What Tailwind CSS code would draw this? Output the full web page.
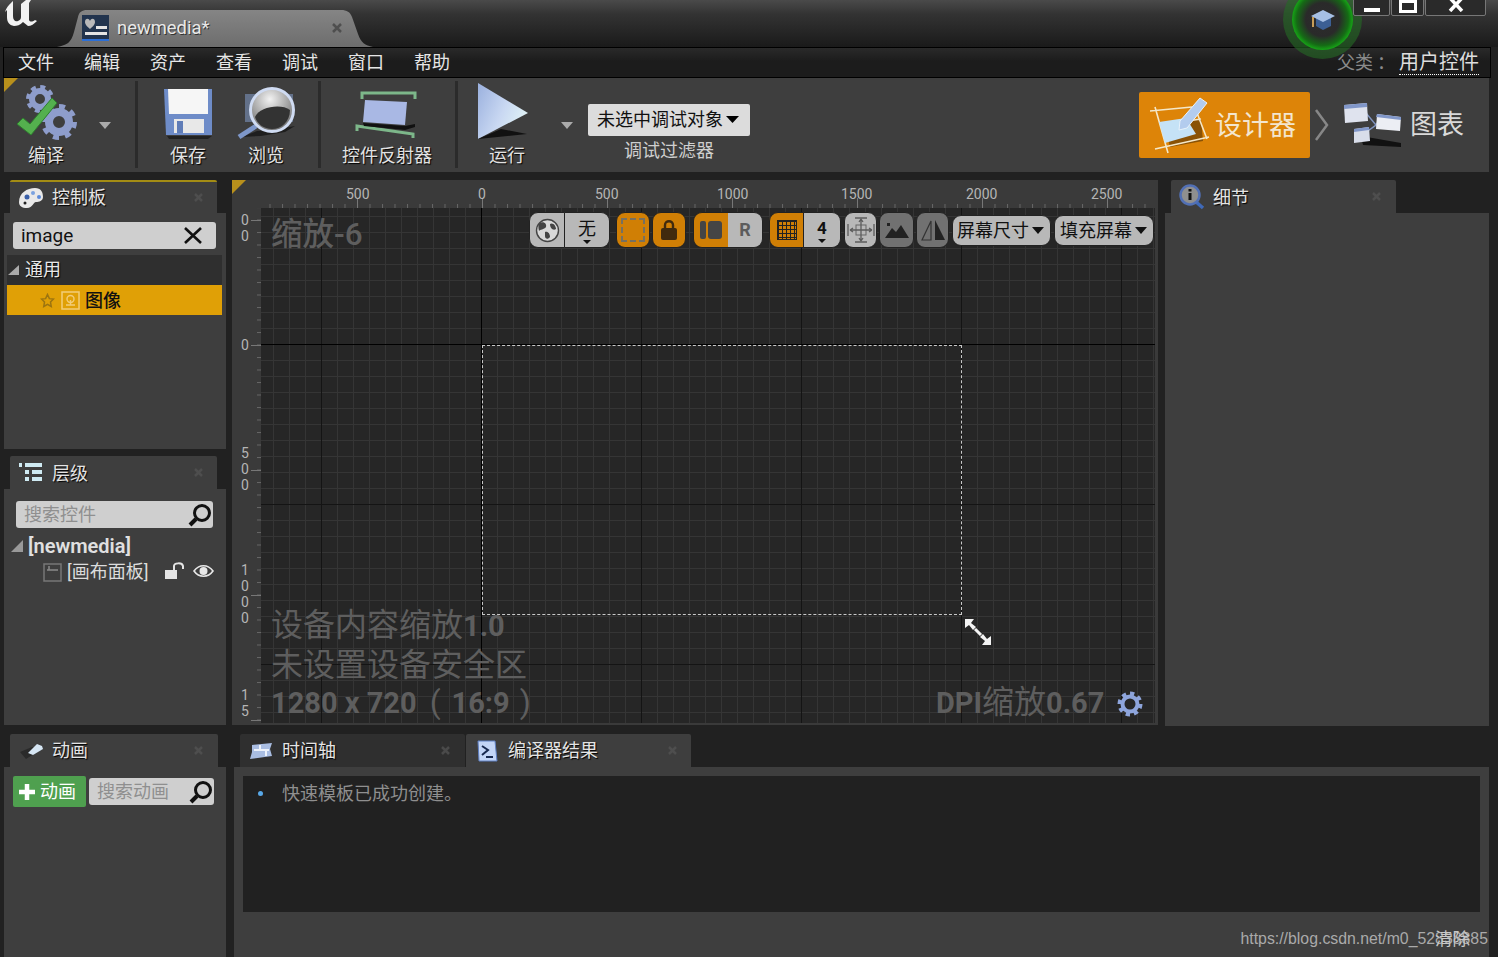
<!DOCTYPE html>
<html lang="zh"><head><meta charset="utf-8"><title>newmedia</title>
<script src="https://cdn.jsdelivr.net/npm/@tailwindcss/browser@4"></script></head>
<body class="m-0 bg-[#212121]">
<div class="relative w-[1498px] h-[957px] overflow-hidden bg-[#212121] text-[#d8d8d8] text-[18px] leading-none font-['Roboto','Noto_Sans_CJK_SC',sans-serif] flex flex-col">

<!-- title bar -->
<header class="relative h-[47px] shrink-0 bg-[linear-gradient(#4a4a4a,#333_30%,#1a1a1a)]">
  <svg class="absolute left-[4px] top-0" width="36" height="28" viewBox="0 0 36 28"><path d="M1 12C3 6 6 4 9 1L9 16C9 20 11 22 14 21C16 20 17 19 17 17L17 4L22 0L27 0L25 3L25 20C26 22 28 22 31 20L33 21C30 24 27 26 24 26L19 22C16 25 13 26 10 26C5 25 3 22 3 17L3 10Z" fill="#f2f2f2"/></svg>
  <svg class="absolute left-[57px] top-[10px]" width="316" height="37" viewBox="0 0 316 37"><defs><linearGradient id="tb" x1="0" y1="0" x2="0" y2="1"><stop offset="0" stop-color="#858585"/><stop offset="1" stop-color="#6d6d6d"/></linearGradient></defs><path d="M0 37C10 35 14 33 17 22L21 7C22 2 25 0 30 0L284 0C290 0 293 2 295 7L301 24C304 33 308 35 316 37Z" fill="url(#tb)"/></svg>
  <div class="absolute left-[82px] top-[15px] flex items-center">
    <svg width="27" height="26" viewBox="0 0 27 26"><rect width="27" height="26" fill="#22344e"/><rect y="24" width="27" height="2" fill="#2c6fd6"/><path d="M3 7C3 3 7 3 8 6C9 3 13 3 13 7C13 10 10 12 8 14C6 12 3 10 3 7Z" fill="#b9b9b9"/><rect x="14" y="11" width="11" height="3" fill="#e4e4e4"/><rect x="3" y="17" width="22" height="3" fill="#e4e4e4"/></svg>
    <span class="ml-[8px] text-[18.4px] text-[#e8e8e8] [text-shadow:1px_1px_0_#333]">newmedia*</span>
  </div>
  <svg class="absolute left-[332px] top-[23px]" width="10" height="10" viewBox="0 0 10 10"><path d="M1 1L9 9M9 1L1 9" stroke="#4f4f4f" stroke-width="2.5"/></svg>
  <!-- tutorial cap -->
  <div class="absolute left-[1283px] top-[-20px] w-[79px] h-[79px] rounded-full bg-[#256a25]/60 flex items-center justify-center z-10">
    <div class="w-[61px] h-[61px] rounded-full bg-[radial-gradient(circle_closest-side,#2c2c2c_0%,#2a2a2a_55%,#156b15_85%,#16a516_100%)] flex items-center justify-center">
      <svg width="26" height="24" viewBox="0 0 26 24"><path d="M6 10V18L13 22L21 18V10Z" fill="#3c5f94"/><path d="M1 8L13 2L25 8L13 14Z" fill="#a6bfe4"/><path d="M3 9V19" stroke="#c79d58" stroke-width="2"/></svg>
    </div>
  </div>
  <!-- window buttons -->
  <div class="absolute left-[1353px] top-[-6px] flex gap-[1px] z-20">
    <div class="w-[37px] h-[22px] border border-[#777] rounded-[2px] bg-[#2a2a2a] flex items-center justify-center"><span class="block w-[16px] h-[4px] mt-[9px] bg-white"></span></div>
    <div class="w-[33px] h-[22px] border border-[#777] rounded-[2px] bg-[#2a2a2a] flex items-center justify-center"><span class="block w-[18px] h-[13px] mt-[2px] border-[3px] border-white"></span></div>
    <div class="w-[61px] h-[22px] border border-[#777] rounded-[2px] bg-[#2a2a2a] flex items-center justify-center"><svg width="16" height="14" viewBox="0 0 16 14"><path d="M2 0L14 13M14 0L2 13" stroke="#fff" stroke-width="3.5"/></svg></div>
  </div>
</header>

<!-- menu -->
<nav class="relative ml-[3px] w-[1488px] h-[31px] shrink-0 border border-black bg-[linear-gradient(#2a2a2a,#1c1c1c_45%,#1c1c1c)] flex items-center pl-[14px] gap-[30px] text-[#e6e6e6]">
  <span>文件</span><span>编辑</span><span>资产</span><span>查看</span><span>调试</span><span>窗口</span><span>帮助</span>
  <div class="ml-auto mr-[11px] flex items-center">
    <span class="text-[#8a8a8a]">父类</span><span class="text-[#8a8a8a] ml-[4px] mr-[4px]">：</span>
    <span class="text-[20px] leading-[24px] text-[#dedede] border-b border-dotted border-white">用户控件</span>
  </div>
</nav>

<!-- toolbar -->
<section class="relative ml-[4px] w-[1485px] h-[94px] shrink-0 bg-[#3e3e3e] flex">
  <div class="absolute left-0 top-0 w-0 h-0 border-t-[14px] border-r-[14px] border-t-[#b8901c] border-r-transparent"></div>
  <!-- compile -->
  <div class="relative w-[131px] h-full">
    <svg class="absolute left-[12px] top-[5px]" width="62" height="58" viewBox="0 0 62 58">
      <g fill="none" stroke="#8e9dcb"><circle cx="24" cy="16" r="8" stroke-width="6"/><circle cx="24" cy="16" r="12" stroke-width="4" stroke-dasharray="5 4.4"/><circle cx="43" cy="39" r="10" stroke-width="8"/><circle cx="43" cy="39" r="15.5" stroke-width="5" stroke-dasharray="6 6.1"/></g>
      <path d="M1 41L7 35L14 41L36 15L41 20L15 52Z" fill="#54b04e" stroke="#2e7f2e"/>
    </svg>
    <svg class="absolute left-[94px] top-[44px]" width="14" height="8" viewBox="0 0 14 8"><path d="M1 0H13L7 7Z" fill="#aaa"/></svg>
    <span class="absolute left-[24px] top-[69px] [text-shadow:1px_1px_1px_#000] text-[#e2e2e2]">编译</span>
  </div>
  <div class="w-[3px] h-[87px] mt-[3px] bg-[#2b2b2b]"></div>
  <!-- save / browse -->
  <div class="relative w-[180px] h-full">
    <svg class="absolute left-[24px] top-[8px]" width="52" height="54" viewBox="0 0 52 54"><path d="M2 3H50V49L4 49Z" fill="#6e8cc8"/><path d="M6 3H46V28H7Z" fill="#f6f6f6"/><path d="M12 33H42V47H12Z" fill="#e8e8e8"/><rect x="15" y="35" width="6" height="12" fill="#5f7cb7"/><path d="M5 50H50L46 53H7Z" fill="#111" opacity=".6"/></svg>
    <svg class="absolute left-[97px] top-[6px]" width="64" height="56" viewBox="0 0 64 56"><defs><radialGradient id="ln" cx=".45" cy=".25" r=".8"><stop offset="0" stop-color="#f2f2f2"/><stop offset=".6" stop-color="#9a9a9a"/><stop offset="1" stop-color="#666"/></radialGradient></defs><path d="M22 47L6 53L26 52L50 48L60 42L36 46Z" fill="#111" opacity=".7"/><rect x="10" y="10" width="48" height="28" fill="#7487ab" opacity=".7"/><path d="M21 42L4 53" stroke="#7e97c9" stroke-width="5"/><circle cx="37" cy="26" r="21.5" fill="url(#ln)" stroke="#cfdbf2" stroke-width="3"/><path d="M20 33C24 23 46 19 55 26C55 38 46 45 37 45C29 45 22 40 20 33Z" fill="#333"/></svg>
    <span class="absolute left-[32px] top-[69px] text-[#e2e2e2] [text-shadow:1px_1px_1px_#000]">保存</span>
    <span class="absolute left-[110px] top-[69px] text-[#e2e2e2] [text-shadow:1px_1px_1px_#000]">浏览</span>
  </div>
  <div class="w-[3px] h-[87px] mt-[3px] bg-[#2b2b2b]"></div>
  <!-- reflector -->
  <div class="relative w-[134px] h-full">
    <svg class="absolute left-[34px] top-[12px]" width="62" height="50" viewBox="0 0 62 50"><path d="M7 9V3H60V9" fill="none" stroke="#7db78a" stroke-width="3"/><path d="M2 41V36L58 44V48" fill="none" stroke="#7db78a" stroke-width="3"/><path d="M10 10L52 12L50 35L8 32Z" fill="#a9b8e4"/><path d="M8 33L50 36L60 34V37L50 40L9 36Z" fill="#111"/></svg>
    <span class="absolute left-[21px] top-[69px] text-[#e2e2e2] [text-shadow:1px_1px_1px_#000]">控件反射器</span>
  </div>
  <div class="w-[3px] h-[87px] mt-[3px] bg-[#2b2b2b]"></div>
  <!-- run -->
  <div class="relative w-[110px] h-full">
    <svg class="absolute left-[19px] top-[4px]" width="54" height="62" viewBox="0 0 54 62"><defs><linearGradient id="rn" x1="0" y1="0" x2="1" y2="0.5"><stop offset="0" stop-color="#9ab0de"/><stop offset=".6" stop-color="#c9d8f2"/><stop offset="1" stop-color="#dff1f5"/></linearGradient></defs><path d="M1 1L51 31L1 57Z" fill="url(#rn)"/><path d="M1 57L24 47L50 52Z" fill="#111"/></svg>
    <span class="absolute left-[31px] top-[69px] text-[#e2e2e2] [text-shadow:1px_1px_1px_#000]">运行</span>
    <svg class="absolute left-[102px] top-[44px]" width="14" height="8" viewBox="0 0 14 8"><path d="M1 0H13L7 7Z" fill="#aaa"/></svg>
  </div>
  <!-- debug -->
  <div class="ml-[20px] w-[162px] flex flex-col items-center pt-[26px]">
    <div class="w-[162px] h-[32px] bg-[#dcdcdc] rounded-[2px] flex items-center pl-[9px] text-[#111]">未选中调试对象<svg class="ml-[3px]" width="13" height="8" viewBox="0 0 13 8"><path d="M0 0H13L6.5 7Z" fill="#000"/></svg></div>
    <span class="mt-[6px] text-[#cfcfcf]">调试过滤器</span>
  </div>
  <!-- mode switch -->
  <div class="absolute left-[1135px] top-[14px] w-[171px] h-[66px] bg-[#dd8408] rounded-[2px] flex items-center">
    <svg class="ml-[8px]" width="64" height="64" viewBox="0 0 64 64"><path d="M18 33L54 26L56 48L23 54Z" fill="#8a5205"/><path d="M20 31L54 26M3 18L45 14M8 14L21 60M8 56L62 44M47 12L60 46" stroke="#f4e7c8" stroke-width="1.6"/><path d="M12 29L39 25L49 41L18 50Z" fill="#c5e2f6"/><path d="M33 28L53 5L60 10L40 35L32 37Z" fill="#b3ccee" stroke="#e8f2fb"/></svg>
    <span class="ml-[4px] mt-[2px] text-[27px] text-[#f3e6cf]">设计器</span>
  </div>
  <svg class="absolute left-[1311px] top-[31px]" width="14" height="32" viewBox="0 0 14 32"><path d="M1 1L12 16L1 31" fill="none" stroke="#878787" stroke-width="2.5"/></svg>
  <svg class="absolute left-[1339px] top-[25px]" width="60" height="44" viewBox="0 0 60 44"><path d="M23 10L33 22L22 30M33 22L36 18" stroke="#7f93bf" stroke-width="1.5" fill="none"/><path d="M18 33L58 40L58 44L20 42Z" fill="#111"/><path d="M1 2L24 0L25 18L2 20Z" fill="#dfe3ee"/><path d="M1 2L24 0V4L1 6Z" fill="#8197c9"/><path d="M34 11L58 14L57 28L33 26Z" fill="#eceef4"/><path d="M34 11L58 14V17L33 14Z" fill="#8197c9"/><path d="M11 26L26 24L27 38L11 40Z" fill="#d9deea"/><path d="M11 26L26 24V27L11 29Z" fill="#8197c9"/></svg>
  <span class="absolute left-[1406px] top-[34px] text-[27px] text-[#d9d9d9]">图表</span>
</section>

<!-- main -->
<main class="mt-[8px] flex pl-[4px] gap-[6px] h-[546px] shrink-0">
  <!-- left column -->
  <div class="w-[222px] flex flex-col">
    <div class="relative ml-[6px] w-[207px] h-[33px] bg-[#3e3e3e] rounded-t-[2px] border-t-2 border-[#a38c14] flex items-center">
      <svg class="ml-[8px]" width="26" height="22" viewBox="0 0 26 22"><path d="M1 15C1 6 9 1 17 1C23 1 25 5 25 10C25 14 21 15 18 15C15 15 15 21 9 21C4 21 1 19 1 15Z" fill="#e9e9e9"/><circle cx="9" cy="10" r="2.5" fill="#395fa8"/><circle cx="15" cy="6" r="2" fill="#7ba2e0"/><circle cx="21" cy="10" r="2" fill="#5b89d8"/><circle cx="7" cy="16" r="1.5" fill="#222"/></svg>
      <span class="ml-[8px] text-[#e4e4e4] [text-shadow:1px_1px_1px_#000]">控制板</span>
      <svg class="absolute left-[184px] top-[11px]" width="9" height="9" viewBox="0 0 9 9"><path d="M1 1L8 8M8 1L1 8" stroke="#4e4e4e" stroke-width="2.5"/></svg>
    </div>
    <div class="h-[236px] bg-[#3e3e3e] flex flex-col pl-[3px] pr-[4px] pt-[9px]">
      <div class="mx-[6px] w-[203px] h-[27px] rounded-[3px] bg-[#cfcfcf] flex items-center justify-between pl-[8px] pr-[14px] text-[19px] text-[#111]"><span>image</span><svg width="18" height="17" viewBox="0 0 18 17"><path d="M1 1L17 16M17 1L1 16" stroke="#111" stroke-width="2.6"/></svg></div>
      <div class="mt-[6px] h-[30px] bg-[#2f2f2f] flex items-center"><svg width="12" height="12" viewBox="0 0 12 12"><path d="M12 1V11H1Z" fill="#aaa"/></svg><span class="ml-[6px] text-[#e8e8e8] [text-shadow:1px_1px_1px_#000]">通用</span></div>
      <div class="h-[30px] bg-[#e0a006] flex items-center text-[#111] font-medium"><svg class="ml-[33px]" width="15" height="15" viewBox="0 0 20 20"><path d="M10 2L12.5 7.5L18 8L14 12L15 18L10 15L5 18L6 12L2 8L7.5 7.5Z" fill="none" stroke="#9c7410" stroke-width="2"/></svg><svg class="ml-[6px]" width="19" height="19" viewBox="0 0 19 19"><rect x="1" y="1" width="17" height="17" fill="none" stroke="#f2cd79" stroke-width="1.5"/><circle cx="9.5" cy="8" r="3.5" fill="none" stroke="#f2cd79" stroke-width="1.4"/><path d="M9.5 9V14M5 14H14" stroke="#f2cd79" stroke-width="1.4"/></svg><span class="ml-[5px] mt-[1px]">图像</span></div>
    </div>
    <div class="h-[7px]"></div>
    <div class="relative ml-[6px] w-[207px] h-[33px] bg-[#3e3e3e] rounded-t-[2px] flex items-center">
      <svg class="ml-[8px]" width="26" height="20" viewBox="0 0 26 20"><path d="M1 2H4M7 2H24M7 9H11M14 9H24M7 16H11M14 16H24" stroke="#cfeaf2" stroke-width="4"/></svg>
      <span class="ml-[8px] mt-[2px] text-[#e4e4e4] [text-shadow:1px_1px_1px_#000]">层级</span>
      <svg class="absolute left-[184px] top-[12px]" width="9" height="9" viewBox="0 0 9 9"><path d="M1 1L8 8M8 1L1 8" stroke="#4e4e4e" stroke-width="2.5"/></svg>
    </div>
    <div class="h-[236px] bg-[#3e3e3e] px-[12px] pt-[12px]">
      <div class="w-[197px] h-[27px] rounded-[3px] bg-[#cfcfcf] flex items-center justify-between pl-[8px] pr-[1px] text-[#8f8f8f]"><span>搜索控件</span><svg width="24" height="24" viewBox="0 0 24 24"><circle cx="14" cy="10" r="7.5" fill="none" stroke="#111" stroke-width="3"/><path d="M8 16L2 22" stroke="#111" stroke-width="4"/></svg></div>
      <div class="mt-[7px] h-[22px] flex items-center -ml-[5px]"><svg width="12" height="12" viewBox="0 0 12 12"><path d="M12 0V12H0Z" fill="#999"/></svg><span class="ml-[5px] text-[20px] font-semibold text-[#e0e0e0]">[newmedia]</span></div>
      <div class="mt-[4px] h-[22px] flex items-center relative"><svg class="ml-[27px]" width="19" height="19" viewBox="0 0 19 19"><rect x="1" y="1" width="17" height="17" fill="none" stroke="#777" stroke-width="1.5"/><path d="M4 7H15M6 3V7" stroke="#8a8a8a" stroke-width="1.5"/></svg><span class="ml-[5px] text-[#dcdcdc]">[画布面板]</span>
        <svg class="absolute left-[149px] top-[1px]" width="20" height="18" viewBox="0 0 20 18"><rect x="0" y="8" width="12" height="9" fill="#e4e4e4"/><path d="M9 8V4C9 1 17 0 18 4V7" fill="none" stroke="#e4e4e4" stroke-width="2"/></svg>
        <svg class="absolute left-[177px] top-[3px]" width="21" height="14" viewBox="0 0 21 14"><path d="M1 7C6 0 15 0 20 7C15 14 6 14 1 7Z" fill="none" stroke="#e8e8e8" stroke-width="1.6"/><circle cx="10.5" cy="7" r="4" fill="#e8e8e8"/></svg>
      </div>
    </div>
  </div>

  <!-- canvas -->
  <div class="relative w-[926px] h-[545px] bg-[#3a3a3a] flex flex-col">
    <div class="absolute left-0 top-0 w-0 h-0 border-t-[14px] border-r-[14px] border-t-[#b8901c] border-r-transparent z-10"></div>
    <div class="relative h-[28px] shrink-0 text-[14px] text-[#b5b5b5]">
      <svg class="absolute left-[29px] bottom-0" width="894" height="10"><defs><pattern id="rx" width="12.5" height="10" patternUnits="userSpaceOnUse" x="8.5"><path d="M.5 6V10" stroke="#666"/></pattern><pattern id="rX" width="125" height="10" patternUnits="userSpaceOnUse" x="-29"><path d="M.5 0V10" stroke="#777"/></pattern></defs><rect width="894" height="10" fill="url(#rx)"/><rect width="894" height="10" fill="url(#rX)"/></svg>
      <span class="absolute left-[114px] top-[7px]">500</span><span class="absolute left-[246px] top-[7px]">0</span><span class="absolute left-[363px] top-[7px]">500</span><span class="absolute left-[485px] top-[7px]">1000</span><span class="absolute left-[609px] top-[7px]">1500</span><span class="absolute left-[734px] top-[7px]">2000</span><span class="absolute left-[859px] top-[7px]">2500</span>
    </div>
    <div class="flex h-[515px]">
      <div class="relative w-[29px] shrink-0 text-[14px] text-[#b5b5b5] overflow-hidden">
        <svg class="absolute right-0 top-0" width="10" height="515"><defs><pattern id="ry" width="10" height="12.5" patternUnits="userSpaceOnUse" y="-1"><path d="M6 .5H10" stroke="#666"/></pattern><pattern id="rY" width="10" height="125" patternUnits="userSpaceOnUse" y="12"><path d="M0 .5H10" stroke="#777"/></pattern></defs><rect width="10" height="515" fill="url(#ry)"/><rect width="10" height="515" fill="url(#rY)"/></svg>
        <div class="absolute left-[9px] top-[4px] leading-[16px]">0<br>0</div>
        <div class="absolute left-[9px] top-[129px] leading-[16px]">0</div>
        <div class="absolute left-[9px] top-[237px] leading-[16px]">5<br>0<br>0</div>
        <div class="absolute left-[9px] top-[354px] leading-[16px]">1<br>0<br>0<br>0</div>
        <div class="absolute left-[9px] top-[479px] leading-[16px]">1<br>5</div>
      </div>
      <div class="relative w-[894px] h-[515px] overflow-hidden bg-[#262626] [background-image:linear-gradient(#000,#000),linear-gradient(#000,#000),linear-gradient(#141414_1px,transparent_1px),linear-gradient(90deg,#141414_1px,transparent_1px),linear-gradient(#353535_1px,transparent_1px),linear-gradient(90deg,#353535_1px,transparent_1px)] [background-size:100%_1px,1px_100%,160px_160px,160px_160px,16px_16px,16px_16px] [background-position:0_136px,220px_0,0_136px,60px_0,0_8px,12px_0] [background-repeat:no-repeat,no-repeat,repeat,repeat,repeat,repeat]">
        <!-- dashed frame -->
        <div class="absolute left-[221px] top-[137px] w-[480px] h-[270px] border border-dashed border-[#c8c8c8]"></div>
        <svg class="absolute left-[703px] top-[410px]" width="28" height="28" viewBox="0 0 28 28"><path d="M1 1H10L7 5L12 9L9 12L5 7L1 10ZM27 27H18L21 23L16 19L19 16L23 21L27 18Z" fill="#f4f4f4"/><path d="M11 11L17 17" stroke="#f4f4f4" stroke-width="3"/></svg>
        <!-- viewport toolbar -->
        <div class="absolute left-[268px] top-[4px] flex items-stretch h-[36px] text-[#111]">
          <div class="w-[36px] rounded-l-[9px] bg-[#b8b8b8] border border-[#222] flex items-center justify-center"><svg width="25" height="25" viewBox="0 0 25 25"><circle cx="12.5" cy="12.5" r="11" fill="#d8d8d8" stroke="#444" stroke-width="1.4"/><path d="M5 5C9 3 12 6 11 9C9 12 5 11 4 13C3 9 3 7 5 5ZM15 6C18 4 21 8 21 11C18 13 15 10 15 6ZM10 14C13 13 15 16 15 19C13 22 10 21 10 18Z" fill="#444"/></svg></div>
          <div class="w-[45px] rounded-r-[9px] bg-[#b8b8b8] border border-l-0 border-[#222] flex flex-col items-center justify-center"><span class="text-[18px] mt-[3px]">无</span><svg class="mt-[2px]" width="8" height="4" viewBox="0 0 8 4"><path d="M0 0H8L4 4Z" fill="#111"/></svg></div>
          <div class="ml-[6px] w-[34px] rounded-[9px] bg-[#d07f05] border border-[#222] flex items-center justify-center"><span class="block w-[24px] h-[24px] border-2 border-dashed border-[#77705f]"></span></div>
          <div class="ml-[2px] w-[34px] rounded-[9px] bg-[#d07f05] border border-[#222] flex items-center justify-center"><svg width="18" height="22" viewBox="0 0 18 22"><rect x="1" y="9" width="16" height="12" rx="2" fill="#402a0e"/><path d="M5 9V6C5 1 13 1 13 6V9" fill="none" stroke="#402a0e" stroke-width="2.4"/></svg></div>
          <div class="ml-[7px] w-[35px] rounded-l-[9px] bg-[#d07f05] border border-r-0 border-[#222] flex items-center justify-center gap-[2px]"><span class="block shrink-0 w-[6px] h-[18px] rounded-[2px] bg-[#454545]"></span><span class="block shrink-0 w-[14px] h-[18px] rounded-[3px] bg-[#454545]"></span></div>
          <div class="w-[35px] rounded-r-[9px] bg-[#b8b8b8] border border-l-0 border-[#222] flex items-center justify-center text-[18px] font-bold text-[#5c5c5c]">R</div>
          <div class="ml-[6px] w-[35px] rounded-l-[9px] bg-[#d07f05] border border-[#222] flex items-center justify-center"><span class="block w-[20px] h-[20px] border border-[#222] [background-image:linear-gradient(#222_1px,transparent_1px),linear-gradient(90deg,#222_1px,transparent_1px)] [background-size:4px_4px]"></span></div>
          <div class="w-[37px] rounded-r-[9px] bg-[#b8b8b8] border border-l-0 border-[#222] flex flex-col items-center justify-center"><span class="text-[17px] font-bold mt-[3px]">4</span><svg class="mt-[2px]" width="8" height="4" viewBox="0 0 8 4"><path d="M0 0H8L4 4Z" fill="#111"/></svg></div>
          <div class="ml-[3px] w-[33px] rounded-[9px] bg-[#b8b8b8] border border-[#222] flex items-center justify-center"><svg width="28" height="26" viewBox="0 0 28 26"><rect x="9" y="8" width="10" height="10" fill="none" stroke="#666"/><path d="M14 2V24M3 13H25M1 7V19M27 7V19M8 1H20M8 25H20M14 2L12 5M14 2L16 5M14 24L12 21M14 24L16 21M3 13L6 11M3 13L6 15M25 13L22 11M25 13L22 15" stroke="#5c5c5c" stroke-width="1.3" fill="none"/></svg></div>
          <div class="ml-[2px] w-[35px] rounded-[9px] bg-[#717171] border border-[#222] flex items-center justify-center"><svg width="24" height="16" viewBox="0 0 24 16"><path d="M0 16L7 6L11 10L16 3L24 16Z" fill="#222"/><rect x="2" y="1" width="3" height="3" fill="#222"/></svg></div>
          <div class="ml-[2px] w-[33px] rounded-[9px] bg-[#717171] border border-[#222] flex items-center justify-center"><svg width="24" height="22" viewBox="0 0 24 22"><path d="M10 2V21H1Z" fill="none" stroke="#333" stroke-width="1.2"/><path d="M14 1V21H24Z" fill="#222"/></svg></div>
          <div class="ml-[3px] w-[99px] h-[31px] mt-[3px] rounded-[9px] bg-[#b8b8b8] border border-[#222] flex items-center pl-[4px]">屏幕尺寸<svg class="ml-[3px]" width="12" height="7" viewBox="0 0 12 7"><path d="M0 0H12L6 7Z" fill="#111"/></svg></div>
          <div class="ml-[3px] w-[100px] h-[31px] mt-[3px] rounded-[9px] bg-[#b8b8b8] border border-[#222] flex items-center pl-[5px]">填充屏幕<svg class="ml-[3px]" width="12" height="7" viewBox="0 0 12 7"><path d="M0 0H12L6 7Z" fill="#111"/></svg></div>
        </div>
        <!-- overlays -->
        <span class="absolute left-[10px] top-[10px] text-[31.5px] leading-[34px] text-[#5e5e5e] font-medium">缩放-6</span>
        <div class="absolute left-[10px] top-[398px] text-[32px] leading-[38.5px] text-[#5e5e5e] whitespace-nowrap"><div>设备内容缩放<span class="text-[29px] font-bold">1.0</span></div><div>未设置设备安全区</div><div class="flex items-baseline -mt-[1px]"><span class="text-[29px] font-bold">1280 x 720</span><span class="ml-[13px] mr-[11px]">(</span><span class="text-[29px] font-bold">16:9</span><span class="ml-[10px]">)</span></div></div>
        <span class="absolute left-[675px] top-[475px] text-[32px] leading-[38px] text-[#5e5e5e] whitespace-nowrap"><span class="text-[29px] font-bold">DPI</span>缩放<span class="text-[29px] font-bold">0.67</span></span>
        <svg class="absolute left-[856px] top-[483px]" width="26" height="26" viewBox="0 0 26 26"><g fill="none" stroke="#8ea5dc"><circle cx="13" cy="13" r="7.5" stroke-width="4"/><circle cx="13" cy="13" r="10.5" stroke-width="4" stroke-dasharray="4.2 4"/></g></svg>
      </div>
    </div>
  </div>

  <!-- details -->
  <div class="ml-[1px] w-[324px] flex flex-col">
    <div class="relative ml-[6px] w-[225px] h-[33px] bg-[#3e3e3e] rounded-t-[2px] flex items-center">
      <svg class="ml-[8px]" width="26" height="26" viewBox="0 0 26 26"><path d="M16 17L24 24" stroke="#3f69b8" stroke-width="3.5"/><circle cx="11" cy="11" r="9.5" fill="#8f8f8f" stroke="#5270b4" stroke-width="2.5"/><rect x="9.5" y="9" width="3" height="7" fill="#111"/><rect x="9.5" y="5" width="3" height="2.5" fill="#111"/></svg>
      <span class="ml-[8px] mt-[2px] text-[#e4e4e4] [text-shadow:1px_1px_1px_#000]">细节</span>
      <svg class="absolute left-[201px] top-[12px]" width="9" height="9" viewBox="0 0 9 9"><path d="M1 1L8 8M8 1L1 8" stroke="#4e4e4e" stroke-width="2.5"/></svg>
    </div>
    <div class="h-[513px] bg-[#3e3e3e]"></div>
  </div>
</main>

<!-- bottom -->
<div class="mt-[8px] pl-[4px] flex gap-[8px] flex-1">
  <div class="w-[222px] flex flex-col">
    <div class="relative ml-[6px] w-[208px] h-[33px] bg-[#3e3e3e] rounded-t-[2px] flex items-center">
      <svg class="ml-[8px]" width="26" height="20" viewBox="0 0 26 20"><path d="M2 11L8 18L24 8L14 6Z" fill="#2a2a2a"/><path d="M10 12L19 3L24 5L25 8L15 14Z" fill="#d6e6f4"/></svg>
      <span class="ml-[8px] text-[#e4e4e4] [text-shadow:1px_1px_1px_#000]">动画</span>
      <svg class="absolute left-[184px] top-[12px]" width="9" height="9" viewBox="0 0 9 9"><path d="M1 1L8 8M8 1L1 8" stroke="#4e4e4e" stroke-width="2.5"/></svg>
    </div>
    <div class="flex-1 bg-[#3e3e3e] flex items-start pl-[9px] pt-[9px]">
      <div class="w-[73px] h-[31px] rounded-[2px] bg-[#4fa04f] flex items-center pl-[5px] text-white text-[18px]"><svg width="18" height="18" viewBox="0 0 18 18"><path d="M9 1V17M1 9H17" stroke="#fff" stroke-width="4.5"/></svg><span class="ml-[4px]">动画</span></div>
      <div class="ml-[3px] mt-[2px] w-[125px] h-[27px] rounded-[3px] bg-[#cfcfcf] flex items-center justify-between pl-[8px] pr-[1px] text-[#8f8f8f]"><span>搜索动画</span><svg width="24" height="24" viewBox="0 0 24 24"><circle cx="14" cy="10" r="7.5" fill="none" stroke="#111" stroke-width="3"/><path d="M8 16L2 22" stroke="#111" stroke-width="4"/></svg></div>
    </div>
  </div>
  <div class="w-[1255px] flex flex-col">
    <div class="flex h-[33px] ml-[6px] shrink-0">
      <div class="relative w-[225px] bg-[#2f2f2f] rounded-t-[2px] flex items-center"><svg class="ml-[9px]" width="24" height="18" viewBox="0 0 24 18"><path d="M3 3L23 1L21 7L23 14L1 17L3 10Z" fill="#a9bde2"/><path d="M5 8H20M11 3V7M17 9V14" stroke="#edf2fb" stroke-width="2"/></svg><span class="ml-[9px] text-[#e4e4e4] [text-shadow:1px_1px_1px_#000]">时间轴</span><svg class="absolute left-[201px] top-[12px]" width="9" height="9" viewBox="0 0 9 9"><path d="M1 1L8 8M8 1L1 8" stroke="#4a4a4a" stroke-width="2.5"/></svg></div>
      <div class="relative ml-[1px] w-[225px] bg-[#3e3e3e] rounded-t-[2px] flex items-center"><svg class="ml-[10px]" width="22" height="22" viewBox="0 0 22 22"><path d="M2 1H19L21 21H3Z" fill="#c3d5f6" stroke="#5f80c4"/><path d="M6 6L12 10L6 15M10 17H17" stroke="#18294f" stroke-width="2" fill="none"/></svg><span class="ml-[10px] text-[#e4e4e4] [text-shadow:1px_1px_1px_#000]">编译器结果</span><svg class="absolute left-[202px] top-[12px]" width="9" height="9" viewBox="0 0 9 9"><path d="M1 1L8 8M8 1L1 8" stroke="#4e4e4e" stroke-width="2.5"/></svg></div>
    </div>
    <div class="flex-1 bg-[#3e3e3e] pt-[9px] px-[9px]">
      <div class="h-[136px] bg-[#212121] flex items-start pt-[9px] pl-[15px] text-[#8f8f8f]"><span class="mt-[6px] w-[5px] h-[5px] rounded-full bg-[#58a8e8]"></span><span class="ml-[19px]">快速模板已成功创建。</span></div>
    </div>
  </div>
</div>

<!-- watermark -->
<div class="absolute right-[10px] bottom-[10px] text-[15.85px] text-[#aaaaaa] whitespace-nowrap font-['Liberation_Sans','Noto_Sans_CJK_SC',sans-serif]">https://blog.csdn.net/m0_52838885<span class="absolute right-[18px] top-0 text-[17.5px] text-[#c8c8c8]">清除</span></div>
</div>
</body></html>
